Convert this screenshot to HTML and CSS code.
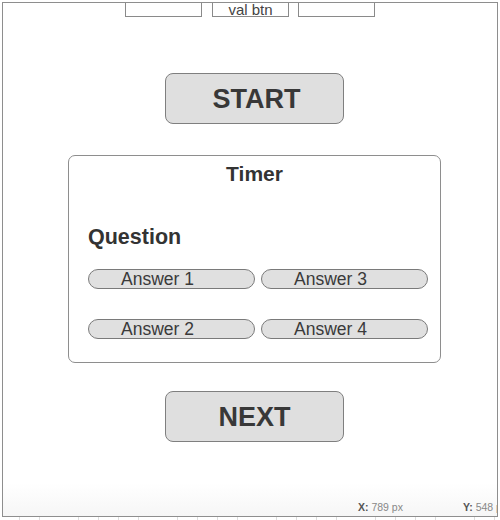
FILE: index.html
```html
<!DOCTYPE html>
<html>
<head>
<meta charset="utf-8">
<link rel="stylesheet" href="styles.css">
</head>
<body>
<div class="frame">
  <div class="tabs">
    <div class="tab"></div>
    <div class="tab">val btn</div>
    <div class="tab"></div>
  </div>
  <div class="big-btn start">START</div>
  <div class="card">
    <div class="timer">Timer</div>
    <div class="question">Question</div>
    <div class="answers">
      <div class="answer">Answer 1</div>
      <div class="answer">Answer 2</div>
      <div class="answer">Answer 3</div>
      <div class="answer">Answer 4</div>
    </div>
  </div>
  <div class="big-btn next">NEXT</div>
  <div class="status">
    <span class="coord"><b>X:</b> 789 px</span>
    <span class="coord"><b>Y:</b> 548 px</span>
  </div>
</div>
<div class="ruler"></div>
</body>
</html>
```
FILE: styles.css
```css
* { box-sizing: border-box; }
html, body {
  margin: 0;
  padding: 0;
  background: #fff;
  width: 500px;
  height: 520px;
  overflow: hidden;
  font-family: "Liberation Sans", Arial, sans-serif;
  color: #333;
}
.frame {
  margin: 2px 0 0 2px;
  width: 496px;
  height: 515px;
  border: 1px solid #8e8e8e;
  display: flex;
  flex-direction: column;
  align-items: center;
  overflow: hidden;
  background: linear-gradient(to bottom, #fff 0, #fff 480px, #f6f6f6 100%);
}
.tabs {
  display: flex;
  gap: 10px;
}
.tab {
  width: 77px;
  height: 14px;
  border: 1px solid #8a8a8a;
  border-top: none;
  font-size: 15px;
  line-height: 13px;
  text-align: center;
  color: #444;
}
.tabs .tab:last-child { margin-left: -1px; }
.big-btn {
  width: 179px;
  height: 51px;
  margin-left: 9px;
  padding-top: 2px;
  border: 1px solid #7f7f7f;
  border-radius: 8px;
  background: #dfdfdf;
  font-weight: bold;
  font-size: 27px;
  line-height: 47px;
  text-align: center;
  color: #383838;
}
.start { margin-top: 56px; padding-left: 4px; }
.next { margin-top: 28px; }
.card {
  margin-top: 31px;
  margin-left: 9px;
  width: 373px;
  height: 208px;
  border: 1px solid #8e8e8e;
  border-radius: 7px;
  padding: 6px 13px 0 19px;
  display: flex;
  flex-direction: column;
}
.timer {
  text-align: center;
  font-weight: bold;
  font-size: 21px;
  line-height: 24px;
  padding-right: 6px;
}
.question {
  margin-top: 39px;
  font-weight: bold;
  font-size: 21.5px;
  line-height: 24px;
}
.answers {
  margin-top: 20px;
  display: grid;
  grid-template-columns: 167px 167px;
  grid-template-rows: 20px 20px;
  grid-auto-flow: column;
  column-gap: 6px;
  row-gap: 30px;
}
.answer {
  border: 1px solid #7a7a7a;
  border-radius: 10px;
  background: #e0e0e0;
  font-size: 17.5px;
  line-height: 18px;
  text-align: center;
  padding-right: 28px;
  color: #3a3a3a;
}
.status {
  margin-top: auto;
  align-self: stretch;
  display: flex;
  padding-left: 355px;
  padding-bottom: 2px;
  font-size: 10.5px;
  line-height: 13px;
  color: #888;
  white-space: nowrap;
}
.coord { flex: 0 0 105px; }
.coord b { color: #555; }
.ruler {
  height: 3px;
  background: repeating-linear-gradient(to right, transparent 0, transparent 19px, #ddd 19px, #ddd 19.8px);
}
```
